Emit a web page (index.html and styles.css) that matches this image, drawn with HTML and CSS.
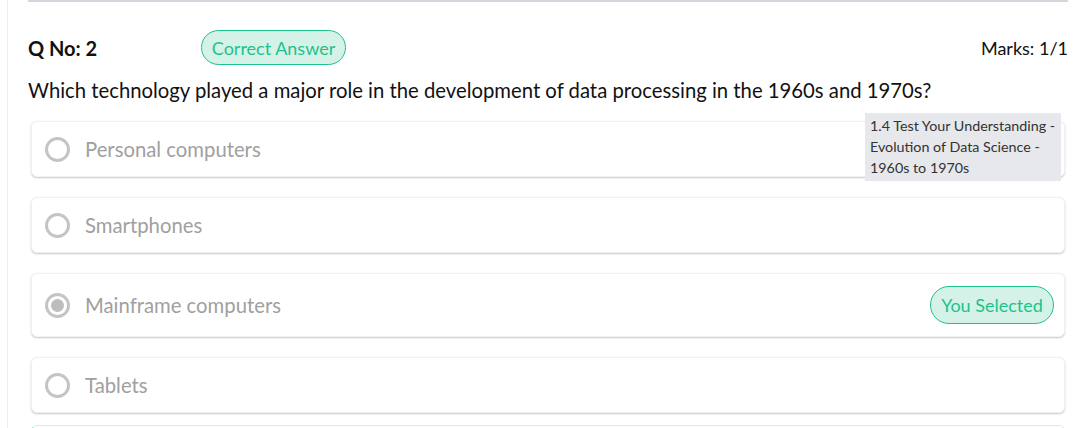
FILE: index.html
```html
<!DOCTYPE html>
<html>
<head>
<meta charset="utf-8">
<link rel="stylesheet" href="styles.css">
</head>
<body>
<div class="page">
  <div class="top-rule"></div>
  <div class="q-head">
    <span class="q-no">Q No: 2</span>
    <span class="pill pill-head">Correct Answer</span>
    <span class="marks">Marks: 1/1</span>
  </div>
  <p class="question">Which technology played a major role in the development of data processing in the 1960s and 1970s?</p>
  <div class="options">
    <div class="option">
      <span class="radio"></span>
      <span class="opt-text">Personal computers</span>
      <div class="tooltip">1.4 Test Your Understanding - Evolution of Data Science - 1960s to 1970s</div>
    </div>
    <div class="option">
      <span class="radio"></span>
      <span class="opt-text">Smartphones</span>
    </div>
    <div class="option">
      <span class="radio checked"></span>
      <span class="opt-text">Mainframe computers</span>
      <span class="pill pill-sel">You Selected</span>
    </div>
    <div class="option">
      <span class="radio"></span>
      <span class="opt-text">Tablets</span>
    </div>
  </div>
  <div class="next-block"></div>
</div>
</body>
</html>
```

FILE: styles.css
```css
html, body {
  margin: 0;
  padding: 0;
  background: #ffffff;
  overflow: hidden;
}
body {
  font-family: "Lato", "Noto Sans", sans-serif;
  color: #1a1a1a;
}
.page {
  margin-left: 7px;
  border-left: 1px solid #ececec;
  min-height: 428px;
  padding: 0 14px 0 20px;
}
.top-rule {
  height: 2px;
  background: #d3d8df;
}
.q-head {
  display: flex;
  align-items: center;
  margin-top: 28px;
  height: 35px;
}
.q-no {
  font-size: 20px;
  font-weight: 700;
  width: 173px;
  color: #111;
}
.pill {
  display: inline-flex;
  align-items: center;
  justify-content: center;
  background: #d5f2e8;
  border: 1px solid #1ec28b;
  color: #1ec28b;
  border-radius: 20px;
  box-sizing: border-box;
}
.pill-head {
  width: 145px;
  height: 35px;
  font-size: 18px;
}
.marks {
  margin-left: auto;
  font-size: 18px;
  color: #111;
}
.question {
  margin: 13px 0 0 0;
  font-size: 20.3px;
  line-height: 24px;
  color: #111;
}
.options {
  margin-top: 19px;
  padding: 0 3px;
  display: flex;
  flex-direction: column;
  gap: 20px;
}
.option {
  position: relative;
  display: flex;
  align-items: center;
  min-height: 56px;
  box-sizing: border-box;
  padding: 12px 10px 12px 13px;
  background: #fff;
  border: 1px solid #f1f1f1;
  border-radius: 6px;
  box-shadow: 0 1px 2px rgba(0, 0, 0, 0.22);
}
.radio {
  width: 25px;
  height: 25px;
  box-sizing: border-box;
  border: 3px solid #c4c4c4;
  border-radius: 50%;
  flex: none;
  display: flex;
  align-items: center;
  justify-content: center;
}
.radio.checked::after {
  content: "";
  width: 13px;
  height: 13px;
  border-radius: 50%;
  background: #bdbdbd;
}
.opt-text {
  margin-left: 15px;
  font-size: 20.3px;
  line-height: 28px;
  color: #a0a0a0;
}
.pill-sel {
  margin-left: auto;
  width: 124px;
  height: 38px;
  font-size: 18px;
}
.tooltip {
  position: absolute;
  top: -9px;
  right: 3px;
  width: 196px;
  box-sizing: border-box;
  padding: 2px 2px 3px 5px;
  background: #e6e8ec;
  color: #333;
  font-size: 14.3px;
  line-height: 21px;
}
.next-block {
  margin: 12px 3px 0 3px;
  height: 40px;
  border: 1px solid #e6e6e6;
  border-left-color: #9fe0c8;
  border-radius: 6px;
}
```
